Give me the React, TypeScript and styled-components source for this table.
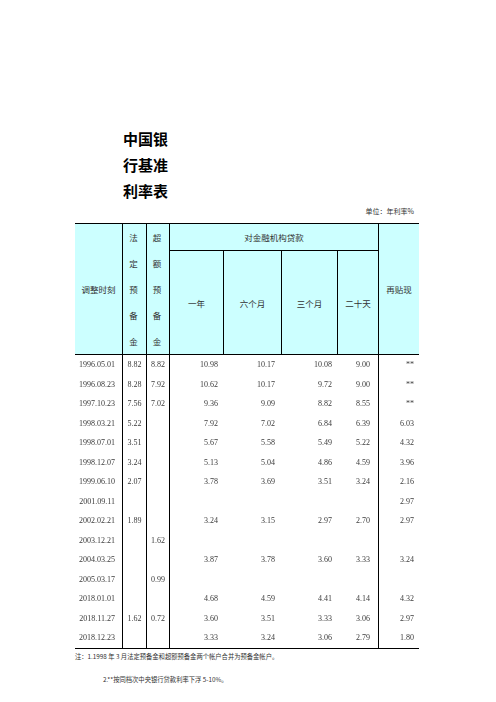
import React from "react";
import styled, { createGlobalStyle } from "styled-components";

const Global = createGlobalStyle`
  html, body { margin: 0; padding: 0; background: #fff; }
  body { font-family: "Noto Sans CJK SC", "Noto Sans", sans-serif; }
`;

const COLS = "47px 24px 23px 54px 58px 56px 41px 41px";
const CJK = `"Noto Sans CJK SC", "Noto Sans", sans-serif`;
const SERIF = `"Liberation Serif", "Noto Sans CJK SC", serif`;

const Page = styled.div`
  padding: 126px 0 0 75px;
  width: 344px;
`;

const Title = styled.h1`
  margin: 0 0 0 48px;
  width: 46px;
  font-family: ${CJK};
  font-size: 15px;
  font-weight: 700;
  line-height: 26px;
  color: #000;
`;

const Unit = styled.div`
  margin: 2px 0 7px;
  padding-right: 5px;
  height: 10px;
  line-height: 10px;
  text-align: right;
  font-family: ${CJK};
  font-size: 7px;
  color: #333;
`;

const HeaderGrid = styled.div`
  display: grid;
  grid-template-columns: ${COLS};
  grid-template-rows: 27px 103px;
  background: #ccffff;
  border-top: 1px solid #000;
  border-bottom: 1px solid #000;
`;

const HCell = styled.div<{ $col: string; $row: string; $left?: boolean; $bottom?: boolean }>`
  grid-column: ${(p) => p.$col};
  grid-row: ${(p) => p.$row};
  box-sizing: border-box;
  display: flex;
  align-items: center;
  justify-content: center;
  border-left: ${(p) => (p.$left ? "1px solid #000" : "none")};
  border-bottom: ${(p) => (p.$bottom ? "1px solid #000" : "none")};
  font-family: ${CJK};
  font-size: 8.5px;
  color: #333;
  white-space: nowrap;
`;

const Stack = styled.span`
  display: block;
  width: 1em;
  line-height: 26.2px;
  text-align: center;
  white-space: normal;
  margin-right: 2px;
`;

const Body = styled.div`
  border-bottom: 1px solid #000;
`;

const Row = styled.div`
  display: grid;
  grid-template-columns: ${COLS};
  height: 19.5px;
`;

const Cell = styled.div<{ $pad?: number; $center?: boolean; $left?: boolean }>`
  box-sizing: border-box;
  display: flex;
  align-items: center;
  justify-content: ${(p) => (p.$center ? "center" : "flex-end")};
  padding-right: ${(p) => (p.$center ? 0 : p.$pad ?? 5)}px;
  border-left: ${(p) => (p.$left ? "1px solid #000" : "none")};
  font-family: ${SERIF};
  font-size: 8px;
  color: #3a3a3a;
  white-space: nowrap;
  filter: grayscale(1);
`;

const Notes = styled.div`
  margin-top: 3px;
  font-family: ${CJK};
  font-size: 6.3px;
  line-height: 10px;
  color: #333;
`;

const Note = styled.p<{ $indent?: number; $gap?: number }>`
  margin: ${(p) => p.$gap ?? 0}px 0 0 ${(p) => p.$indent ?? 0}px;
  white-space: nowrap;
`;

const rows: string[][] = [
  ["1996.05.01", "8.82", "8.82", "10.98", "10.17", "10.08", "9.00", "**"],
  ["1996.08.23", "8.28", "7.92", "10.62", "10.17", "9.72", "9.00", "**"],
  ["1997.10.23", "7.56", "7.02", "9.36", "9.09", "8.82", "8.55", "**"],
  ["1998.03.21", "5.22", "", "7.92", "7.02", "6.84", "6.39", "6.03"],
  ["1998.07.01", "3.51", "", "5.67", "5.58", "5.49", "5.22", "4.32"],
  ["1998.12.07", "3.24", "", "5.13", "5.04", "4.86", "4.59", "3.96"],
  ["1999.06.10", "2.07", "", "3.78", "3.69", "3.51", "3.24", "2.16"],
  ["2001.09.11", "", "", "", "", "", "", "2.97"],
  ["2002.02.21", "1.89", "", "3.24", "3.15", "2.97", "2.70", "2.97"],
  ["2003.12.21", "", "1.62", "", "", "", "", ""],
  ["2004.03.25", "", "", "3.87", "3.78", "3.60", "3.33", "3.24"],
  ["2005.03.17", "", "0.99", "", "", "", "", ""],
  ["2018.01.01", "", "", "4.68", "4.59", "4.41", "4.14", "4.32"],
  ["2018.11.27", "1.62", "0.72", "3.60", "3.51", "3.33", "3.06", "2.97"],
  ["2018.12.23", "", "", "3.33", "3.24", "3.06", "2.79", "1.80"],
];

export default function App() {
  return (
    <>
      <Global />
      <Page>
        <Title>中国银行基准利率表</Title>
        <Unit>单位：年利率%</Unit>
        <HeaderGrid>
          <HCell $col="1" $row="1 / 3">调整时刻</HCell>
          <HCell $col="2" $row="1 / 3" $left>
            <Stack>法定预备金</Stack>
          </HCell>
          <HCell $col="3" $row="1 / 3" $left>
            <Stack>超额预备金</Stack>
          </HCell>
          <HCell $col="4 / 8" $row="1" $left $bottom>
            对金融机构贷款
          </HCell>
          <HCell $col="4" $row="2" $left>一年</HCell>
          <HCell $col="5" $row="2" $left>六个月</HCell>
          <HCell $col="6" $row="2" $left>三个月</HCell>
          <HCell $col="7" $row="2" $left>二十天</HCell>
          <HCell $col="8" $row="1 / 3" $left>再贴现</HCell>
        </HeaderGrid>
        <Body>
          {rows.map((r) => (
            <Row key={r[0]}>
              <Cell $pad={7}>{r[0]}</Cell>
              <Cell $center $left>{r[1]}</Cell>
              <Cell $center $left>{r[2]}</Cell>
              <Cell $left $pad={5}>{r[3]}</Cell>
              <Cell $pad={6}>{r[4]}</Cell>
              <Cell $pad={5}>{r[5]}</Cell>
              <Cell $pad={8}>{r[6]}</Cell>
              <Cell $left $pad={5}>{r[7]}</Cell>
            </Row>
          ))}
        </Body>
        <Notes>
          <Note>注：1.1998 年 3 月法定预备金和超额预备金两个帐户合并为预备金帐户。</Note>
          <Note $indent={28} $gap={13.6}>2.**按同档次中央银行贷款利率下浮 5-10%。</Note>
        </Notes>
      </Page>
    </>
  );
}
